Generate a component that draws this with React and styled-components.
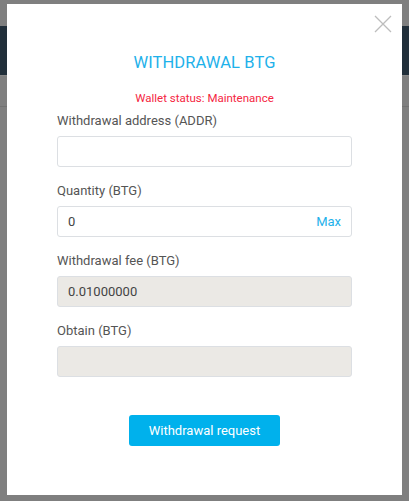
import React from "react";
import styled, { createGlobalStyle } from "styled-components";

const GlobalStyle = createGlobalStyle`
  html, body {
    margin: 0;
    padding: 0;
    background: #7f7f7f;
  }
  * {
    box-sizing: border-box;
  }
`;

const Field = ({ label, value, disabled, max }) => (
  <FieldWrap>
    <Label>{label}</Label>
    <InputBox disabled={disabled}>
      <Value>{value}</Value>
      {max && <MaxLink>Max</MaxLink>}
    </InputBox>
  </FieldWrap>
);

const App = () => {
  return (
    <>
      <GlobalStyle />
      <Page>
        <TopGap />
        <HeaderBand />
        <SubBar />
        <Modal>
          <CloseButton aria-label="close">
            <svg width="18" height="18" viewBox="0 0 18 18">
              <path d="M1 1 L17 17 M17 1 L1 17" stroke="#bdbdbd" strokeWidth="1.3" />
            </svg>
          </CloseButton>
          <Title>WITHDRAWAL BTG</Title>
          <Status>Wallet status: Maintenance</Status>
          <Form>
            <Field label="Withdrawal address (ADDR)" value="" />
            <Field label="Quantity (BTG)" value="0" max />
            <Field label="Withdrawal fee (BTG)" value="0.01000000" disabled />
            <Field label="Obtain (BTG)" value="" disabled />
          </Form>
          <Actions>
            <SubmitButton>Withdrawal request</SubmitButton>
          </Actions>
        </Modal>
      </Page>
    </>
  );
};

export default App;

const Page = styled.div`
  position: relative;
  width: 409px;
  height: 501px;
  overflow: hidden;
  background: #7f7f7f;
  font-family: "Roboto", "Liberation Sans", sans-serif;
`;

const TopGap = styled.div`
  height: 26px;
`;

const HeaderBand = styled.div`
  height: 50px;
  background: #212f3a;
  border-bottom: 1px solid #878787;
`;

const SubBar = styled.div`
  height: 31px;
  border-bottom: 1px solid #727272;
`;

const Modal = styled.div`
  position: absolute;
  top: 4px;
  left: 7px;
  width: 395px;
  height: 491px;
  background: #ffffff;
  display: flex;
  flex-direction: column;
  align-items: center;
  padding-top: 49px;
`;

const CloseButton = styled.button`
  position: absolute;
  top: 10px;
  right: 9px;
  width: 20px;
  height: 20px;
  padding: 0;
  border: none;
  background: transparent;
  display: flex;
  align-items: center;
  justify-content: center;
`;

const Title = styled.h2`
  margin: 0;
  font-size: 16.5px;
  font-weight: 400;
  line-height: 20px;
  color: #1eb1ea;
  letter-spacing: 0.1px;
`;

const Status = styled.div`
  margin-top: 18px;
  font-size: 11.5px;
  line-height: 14px;
  color: #f5263f;
`;

const Form = styled.div`
  width: 295px;
  margin-top: 8px;
  display: flex;
  flex-direction: column;
  gap: 16px;
`;

const FieldWrap = styled.div`
  display: flex;
  flex-direction: column;
  gap: 8px;
`;

const Label = styled.label`
  font-size: 13px;
  line-height: 15px;
  color: #555555;
`;

const InputBox = styled.div`
  height: 31px;
  border: 1px solid #dcdfe3;
  border-radius: 3px;
  background: ${({ disabled }) => (disabled ? "#ebe9e5" : "#ffffff")};
  display: flex;
  align-items: center;
  justify-content: space-between;
  padding: 0 10px;
`;

const Value = styled.span`
  font-size: 13px;
  color: #444444;
`;

const MaxLink = styled.span`
  font-size: 13px;
  color: #1eb1ea;
`;

const Actions = styled.div`
  margin-top: 38px;
`;

const SubmitButton = styled.button`
  width: 151px;
  height: 31px;
  border: none;
  border-radius: 3px;
  background: #00b1ec;
  color: #ffffff;
  font-family: "Roboto", "Liberation Sans", sans-serif;
  font-size: 13px;
`;
